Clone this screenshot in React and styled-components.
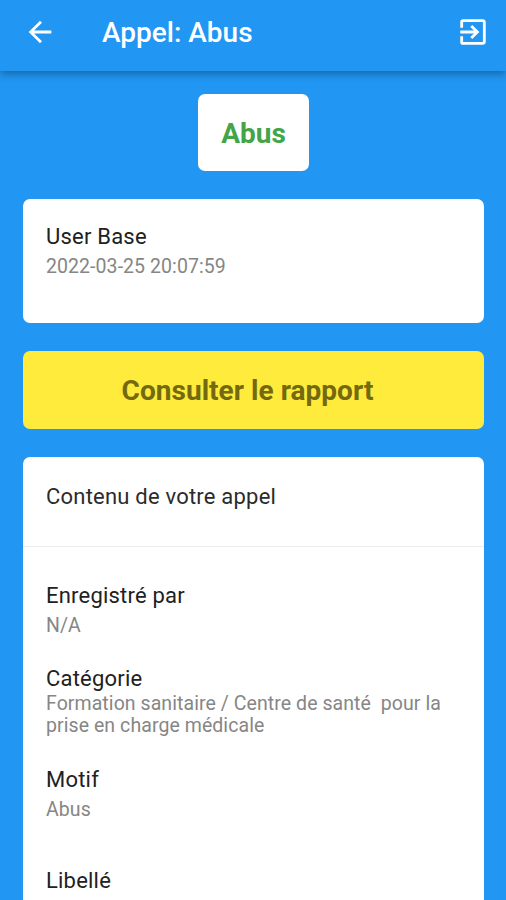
import styled, { createGlobalStyle } from 'styled-components'
import { MdArrowBack, MdExitToApp } from 'react-icons/md'

const GlobalStyle = createGlobalStyle`
  * {
    box-sizing: border-box;
  }

  body {
    margin: 0;
    overflow: hidden;
    background: #2196f3;
    font-family: Roboto, sans-serif;
  }

  p, h1, h2 {
    margin: 0;
  }
`

const Screen = styled.div`
  display: flex;
  flex-direction: column;
  height: 900px;
  overflow: hidden;
  background: #2196f3;
`

const AppBar = styled.header`
  display: flex;
  align-items: center;
  flex-shrink: 0;
  height: 71px;
  padding: 0 16px 6px 23px;
  color: #fff;
  box-shadow: 0 3px 8px rgba(0, 0, 0, 0.32);
`

const IconButton = styled.button`
  display: flex;
  padding: 0 0 1px;
  border: none;
  background: none;
  color: inherit;
  font-size: 34px;
`

const Title = styled.h1`
  flex: 1;
  margin-left: 45px;
  font-size: 28px;
  font-weight: 500;
  line-height: 34px;
`

const Content = styled.main`
  display: flex;
  flex-direction: column;
  gap: 28px;
  padding: 23px 22px 0 23px;
`

const Card = styled.section`
  flex-shrink: 0;
  height: ${({ $height }) => $height};
  border-radius: 7px;
  background: #fff;
`

const Status = styled.div`
  display: flex;
  align-items: center;
  justify-content: center;
  align-self: center;
  width: 111px;
  height: 77px;
  padding-top: 2px;
  border-radius: 7px;
  background: #fff;
  color: #43a547;
  font-size: 28px;
  font-weight: 700;
`

const ReportButton = styled.button`
  flex-shrink: 0;
  height: 78px;
  padding: 1px 12px 0 0;
  border: none;
  border-radius: 7px;
  background: #ffeb3b;
  color: #73690f;
  font: 700 28px Roboto, sans-serif;
  letter-spacing: 0.04px;
`

const CardTitle = styled.h2`
  height: 90px;
  padding: 27px 23px 0;
  border-bottom: 1px solid #ececec;
  color: #2b2b2b;
  font-size: 22px;
  font-weight: 400;
  line-height: 26px;
  letter-spacing: 0.21px;
`

const Item = styled.div`
  height: ${({ $height }) => $height};
  padding: 0 23px;
`

const Author = styled(Item)`
  padding-top: 25px;
`

const Label = styled.p`
  color: #212121;
  font-size: 22px;
  line-height: 26px;
  letter-spacing: 0.21px;
`

const Value = styled.p`
  margin-top: ${({ $tight }) => ($tight ? '0.5px' : '6px')};
  color: #868686;
  font-size: 19.5px;
  line-height: 22.5px;
  letter-spacing: 0.07px;
  white-space: pre-wrap;
`

const Details = styled.div`
  padding-top: 36px;
`

const details = [
  { label: 'Enregistré par', value: 'N/A', height: '83px' },
  {
    label: 'Catégorie',
    value: 'Formation sanitaire / Centre de santé  pour la prise en charge médicale',
    height: '101px',
    tight: true,
  },
  { label: 'Motif', value: 'Abus', height: '101px' },
  { label: 'Libellé', value: '', height: '83px' },
]

const App = () => {
  return (
    <Screen>
      <GlobalStyle />
      <AppBar>
        <IconButton type='button' aria-label='Retour'>
          <MdArrowBack />
        </IconButton>
        <Title>Appel: Abus</Title>
        <IconButton type='button' aria-label='Quitter'>
          <MdExitToApp />
        </IconButton>
      </AppBar>
      <Content>
        <Status>Abus</Status>
        <Card $height='124px'>
          <Author>
            <Label>User Base</Label>
            <Value>2022-03-25 20:07:59</Value>
          </Author>
        </Card>
        <ReportButton type='button'>Consulter le rapport</ReportButton>
        <Card $height='520px'>
          <CardTitle>Contenu de votre appel</CardTitle>
          <Details>
            {details.map((item) => (
              <Item key={item.label} $height={item.height}>
                <Label>{item.label}</Label>
                <Value $tight={item.tight}>{item.value}</Value>
              </Item>
            ))}
          </Details>
        </Card>
      </Content>
    </Screen>
  )
}

export default App
